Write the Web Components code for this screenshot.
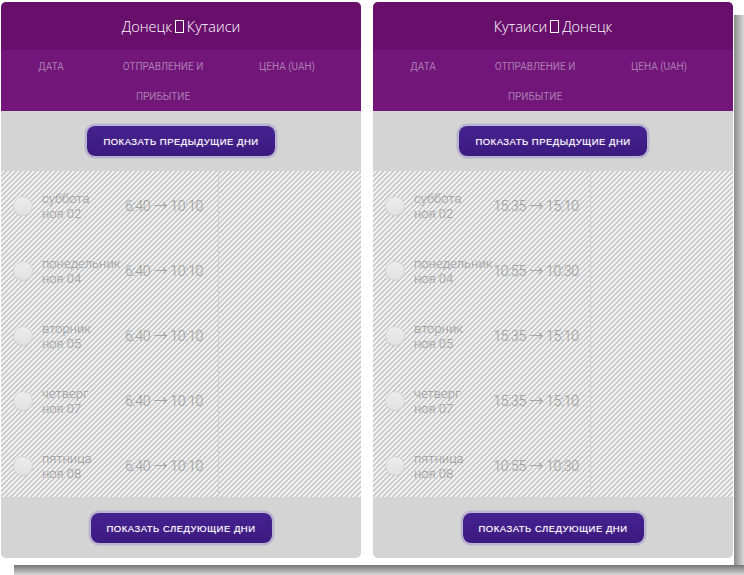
<!DOCTYPE html>
<html>
<head>
<meta charset="utf-8">
<title>Расписание</title>
<style>
  html, body { margin: 0; padding: 0; background: #fff; }
</style>
</head>
<body>
<schedule-page>
  <schedule-panel route-from="Донецк" route-to="Кутаиси">
    <schedule-row day="суббота" date="ноя 02" times="6:40 → 10:10"></schedule-row>
    <schedule-row day="понедельник" date="ноя 04" times="6:40 → 10:10"></schedule-row>
    <schedule-row day="вторник" date="ноя 05" times="6:40 → 10:10"></schedule-row>
    <schedule-row day="четверг" date="ноя 07" times="6:40 → 10:10"></schedule-row>
    <schedule-row day="пятница" date="ноя 08" times="6:40 → 10:10"></schedule-row>
  </schedule-panel>
  <schedule-panel route-from="Кутаиси" route-to="Донецк">
    <schedule-row day="суббота" date="ноя 02" times="15:35 → 15:10"></schedule-row>
    <schedule-row day="понедельник" date="ноя 04" times="10:55 → 10:30"></schedule-row>
    <schedule-row day="вторник" date="ноя 05" times="15:35 → 15:10"></schedule-row>
    <schedule-row day="четверг" date="ноя 07" times="15:35 → 15:10"></schedule-row>
    <schedule-row day="пятница" date="ноя 08" times="10:55 → 10:30"></schedule-row>
  </schedule-panel>
</schedule-page>

<script>
class SchedulePage extends HTMLElement {
  connectedCallback() {
    this.attachShadow({ mode: 'open' });
    this.shadowRoot.innerHTML = `
      <style>
        :host {
          display: block;
          position: relative;
          width: 744px;
          height: 575px;
          overflow: hidden;
          background: #fff;
        }
        /* screenshot drop shadow, sits behind the panels */
        .shadow-right {
          position: absolute;
          left: 734px;
          top: 15px;
          width: 10px;
          height: 560px;
          background: linear-gradient(to right, #8c8c8c, #d8d8d8);
        }
        .shadow-bottom {
          position: absolute;
          left: 14px;
          top: 565px;
          width: 730px;
          height: 10px;
          background: linear-gradient(to bottom, #737373, #d8d8d8);
        }
        .panels {
          position: relative;
          display: flex;
          gap: 12px;
          padding: 2px 0 0 1px;
        }
      </style>
      <div class="shadow-right"></div>
      <div class="shadow-bottom"></div>
      <div class="panels"><slot></slot></div>
    `;
  }
}

class SchedulePanel extends HTMLElement {
  connectedCallback() {
    const from = this.getAttribute('route-from');
    const to = this.getAttribute('route-to');
    this.attachShadow({ mode: 'open' });
    this.shadowRoot.innerHTML = `
      <style>
        :host {
          display: block;
          width: 360px;
          height: 556px;
          border-radius: 5px;
          overflow: hidden;
          background: #d4d4d4;
          font-family: Roboto, "Liberation Sans", sans-serif;
        }
        .title {
          height: 48px;
          display: flex;
          align-items: center;
          justify-content: center;
          gap: 3px;
          background: #680f6c;
          color: #fff;
          font-size: 14.5px;
          font-weight: 300;
          font-family: "Open Sans", sans-serif;
        }
        .tofu {
          width: 7px;
          height: 11px;
          border: 1px solid #fff;
          margin-top: 1px;
        }
        .cols {
          height: 61px;
          display: grid;
          grid-template-columns: 100px 124px 124px;
          background: #72167a;
          color: #ab7db0;
          font-size: 10px;
          font-weight: 400;
          line-height: 30px;
          text-align: center;
        }
        .cols div { padding-top: 2px; }
        .more {
          height: 60px;
          display: flex;
          align-items: center;
          justify-content: center;
        }
        .more.next { height: 61px; padding-top: 1px; box-sizing: border-box; }
        .more button {
          height: 30px;
          border: 0;
          border-radius: 8px;
          box-shadow: 0 0 0 2.5px #b9b4cf;
          background: linear-gradient(to bottom, #45228f, #3c1a80);
          color: #fff;
          font-family: "Liberation Sans", sans-serif;
          font-size: 9.5px;
          letter-spacing: 0.5px;
          text-shadow: 0 0 1px rgba(255, 255, 255, 0.5);
          padding: 0;
        }
        .prev button { width: 188px; }
        .next button { width: 181px; }
        .rows {
          box-sizing: border-box;
          height: 326px;
          padding-top: 2px;
          position: relative;
          background-color: #eee;
          background-image: linear-gradient(135deg,
            #c6c6c6 20%, #efefef 20%, #efefef 50%,
            #c6c6c6 50%, #c6c6c6 70%, #efefef 70%);
          background-size: 5px 5px;
        }
        .rows::after {
          content: '';
          position: absolute;
          left: 217px;
          top: 0;
          bottom: 0;
          border-left: 1px solid #cfcfcf;
        }
      </style>
      <div class="title"><span>${from}</span><span class="tofu"></span><span>${to}</span></div>
      <div class="cols">
        <div>ДАТА</div>
        <div>ОТПРАВЛЕНИЕ И ПРИБЫТИЕ</div>
        <div>ЦЕНА (UAH)</div>
      </div>
      <div class="more prev"><button>ПОКАЗАТЬ ПРЕДЫДУЩИЕ ДНИ</button></div>
      <div class="rows"><slot></slot></div>
      <div class="more next"><button>ПОКАЗАТЬ СЛЕДУЮЩИЕ ДНИ</button></div>
    `;
  }
}

class ScheduleRow extends HTMLElement {
  connectedCallback() {
    this.attachShadow({ mode: 'open' });
    this.shadowRoot.innerHTML = `
      <style>
        :host {
          display: flex;
          align-items: center;
          height: 65px;
          color: #9c9c9c;
          font-family: Roboto, "Liberation Sans", sans-serif;
          font-weight: 300;
        }
        .radio {
          flex: none;
          width: 18px;
          height: 18px;
          margin-left: 13px;
          border-radius: 50%;
          background: linear-gradient(to bottom, #ececec, #e2e2e2);
          box-shadow: 0 0 0 1px #d6d6d6, 0 1px 1px #bbb;
        }
        .date {
          flex: none;
          width: 81px;
          margin-left: 10px;
          font-size: 13px;
          line-height: 15px;
          white-space: nowrap;
        }
        .times {
          flex: none;
          width: 82px;
          display: flex;
          justify-content: center;
          font-size: 14px;
          white-space: nowrap;
          letter-spacing: -0.3px;
        }
        .times i {
          font-style: normal;
          font-family: "DejaVu Sans", sans-serif;
          font-weight: 200;
          font-size: 17px;
          line-height: 14px;
        }
        .times span { white-space: pre; }
      </style>
      <div class="radio"></div>
      <div class="date">${this.getAttribute('day')}<br>${this.getAttribute('date')}</div>
      <div class="times"><span>${this.getAttribute('times').replace('→', '<i>→</i>')}</span></div>
    `;
  }
}

customElements.define('schedule-page', SchedulePage);
customElements.define('schedule-panel', SchedulePanel);
customElements.define('schedule-row', ScheduleRow);
</script>
</body>
</html>
